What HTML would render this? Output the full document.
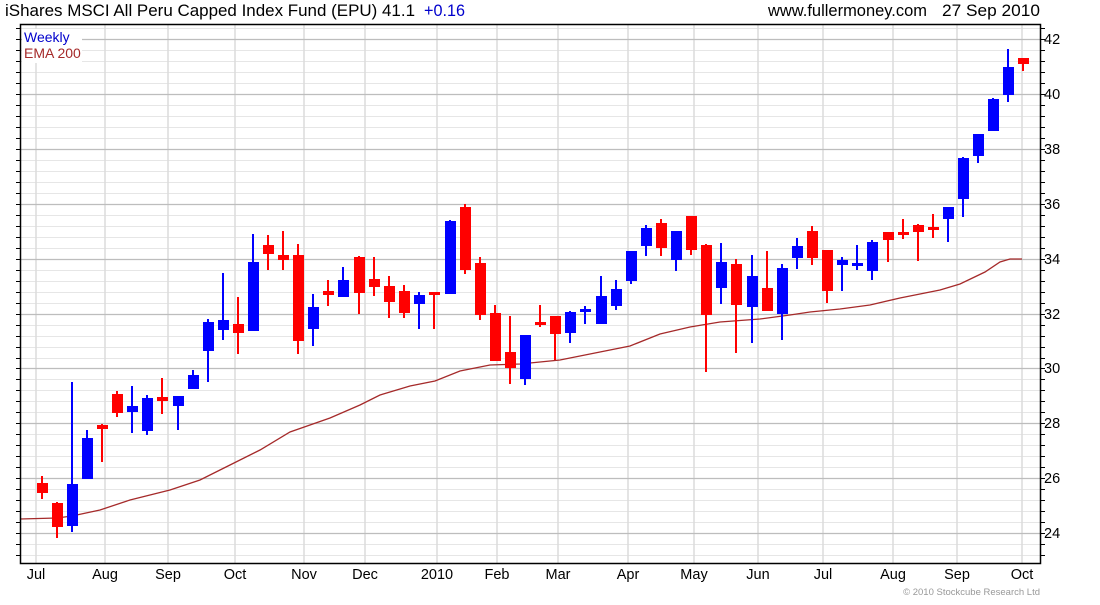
<!DOCTYPE html>
<html><head><meta charset="utf-8"><style>
body{margin:0;background:#fff;width:1100px;height:600px;overflow:hidden;font-family:"Liberation Sans",Arial,sans-serif}
svg text{font-family:"Liberation Sans",Arial,sans-serif}
</style></head><body>
<svg width="1100" height="600" viewBox="0 0 1100 600" xmlns="http://www.w3.org/2000/svg">
<g stroke="#e6e6e6" stroke-width="1">
<path d="M20 28.5H1040M20 50.5H1040M20 61.5H1040M20 72.5H1040M20 83.5H1040M20 105.5H1040M20 116.5H1040M20 127.5H1040M20 138.5H1040M20 160.5H1040M20 171.5H1040M20 182.5H1040M20 193.5H1040M20 215.5H1040M20 226.5H1040M20 237.5H1040M20 248.5H1040M20 270.5H1040M20 281.5H1040M20 292.5H1040M20 303.5H1040M20 325.5H1040M20 336.5H1040M20 347.5H1040M20 358.5H1040M20 379.5H1040M20 390.5H1040M20 401.5H1040M20 412.5H1040M20 434.5H1040M20 445.5H1040M20 456.5H1040M20 467.5H1040M20 489.5H1040M20 500.5H1040M20 511.5H1040M20 522.5H1040M20 544.5H1040M20 555.5H1040"/>
</g>
<g stroke="#dcdcdc" stroke-width="1.5">
<path d="M36 24V563M105 24V563M168 24V563M235 24V563M304 24V563M365 24V563M437 24V563M497 24V563M558 24V563M628 24V563M694 24V563M758 24V563M823 24V563M893 24V563M957 24V563M1022 24V563"/>
</g>
<g stroke="#bdbdbd" stroke-width="1.2">
<path d="M20 39.5H1040M20 94.5H1040M20 149.5H1040M20 204.5H1040M20 259.5H1040M20 314.5H1040M20 368.5H1040M20 423.5H1040M20 478.5H1040M20 533.5H1040"/>
</g>
<rect x="22" y="29" width="60" height="34" fill="#fff"/>
<polyline fill="none" stroke="#a52a2a" stroke-width="1.3" points="20,519 57,518 72,516 100,510 130,500 170,490 200,480 230,465 260,450 290,432 330,418 360,405 380,395 410,386 435,381 460,371 490,365 520,364 560,360 600,352 630,346 660,334 690,327 720,322 760,319 790,315 810,312 840,309 870,305 900,298 940,290 960,284 985,272 1000,262 1010,259 1022,259"/>
<g stroke="#ff0000" stroke-width="2" fill="#ff0000">
<path d="M42 476V499M57 502V538M102 424V462M117 391V417M162 378V414M238 297V354M268 235V270M283 231V270M298 244V354M328 280V306M359 256V314M374 257V296M389 276V318M404 285V318M434 292V329M465 204V274M480 257V320M495 305V361M510 316V384M540 305V327M555 316V360M661 219V256M691 216V255M706 244V372M736 259V353M767 251V311M812 226V265M827 250V303M888 232V262M903 219V239M918 224V261M933 214V238M1023 58V71"/>
</g>
<g fill="#ff0000">
<rect x="37" y="483" width="11" height="10"/><rect x="52" y="503" width="11" height="24"/><rect x="97" y="425" width="11" height="4"/><rect x="112" y="394" width="11" height="19"/><rect x="157" y="397" width="11" height="4"/><rect x="233" y="324" width="11" height="9"/><rect x="263" y="245" width="11" height="9"/><rect x="278" y="255" width="11" height="5"/><rect x="293" y="255" width="11" height="86"/><rect x="323" y="291" width="11" height="4"/><rect x="354" y="257" width="11" height="36"/><rect x="369" y="279" width="11" height="8"/><rect x="384" y="286" width="11" height="16"/><rect x="399" y="291" width="11" height="22"/><rect x="429" y="292" width="11" height="3"/><rect x="460" y="207" width="11" height="63"/><rect x="475" y="263" width="11" height="52"/><rect x="490" y="313" width="11" height="48"/><rect x="505" y="352" width="11" height="16"/><rect x="535" y="322" width="11" height="3"/><rect x="550" y="316" width="11" height="18"/><rect x="656" y="223" width="11" height="25"/><rect x="686" y="216" width="11" height="34"/><rect x="701" y="245" width="11" height="70"/><rect x="731" y="264" width="11" height="41"/><rect x="762" y="288" width="11" height="23"/><rect x="807" y="231" width="11" height="27"/><rect x="822" y="250" width="11" height="41"/><rect x="883" y="232" width="11" height="8"/><rect x="898" y="232" width="11" height="3"/><rect x="913" y="225" width="11" height="7"/><rect x="928" y="227" width="11" height="3"/><rect x="1018" y="58" width="11" height="6"/>
</g>
<g stroke="#0000ff" stroke-width="2">
<path d="M72 382V532M87 430V479M132 386V433M147 395V435M178 396V430M193 370V389M208 319V382M223 273V340M253 234V331M313 294V346M343 267V297M419 292V329M450 220V294M525 335V385M570 311V343M585 306V324M601 276V324M616 280V310M631 251V284M646 225V256M676 231V271M721 243V304M752 255V343M782 264V340M797 238V269M842 257V291M857 245V270M872 240V280M948 207V242M963 157V217M978 134V163M993 98V131M1008 49V102"/>
</g>
<g fill="#0000ff">
<rect x="67" y="484" width="11" height="42"/><rect x="82" y="438" width="11" height="41"/><rect x="127" y="406" width="11" height="6"/><rect x="142" y="398" width="11" height="33"/><rect x="173" y="396" width="11" height="10"/><rect x="188" y="375" width="11" height="14"/><rect x="203" y="322" width="11" height="29"/><rect x="218" y="320" width="11" height="10"/><rect x="248" y="262" width="11" height="69"/><rect x="308" y="307" width="11" height="22"/><rect x="338" y="280" width="11" height="17"/><rect x="414" y="295" width="11" height="9"/><rect x="445" y="221" width="11" height="73"/><rect x="520" y="335" width="11" height="44"/><rect x="565" y="312" width="11" height="21"/><rect x="580" y="309" width="11" height="3"/><rect x="596" y="296" width="11" height="28"/><rect x="611" y="289" width="11" height="17"/><rect x="626" y="251" width="11" height="30"/><rect x="641" y="228" width="11" height="18"/><rect x="671" y="231" width="11" height="29"/><rect x="716" y="262" width="11" height="26"/><rect x="747" y="276" width="11" height="31"/><rect x="777" y="268" width="11" height="46"/><rect x="792" y="246" width="11" height="12"/><rect x="837" y="260" width="11" height="5"/><rect x="852" y="263" width="11" height="3"/><rect x="867" y="242" width="11" height="29"/><rect x="943" y="207" width="11" height="12"/><rect x="958" y="158" width="11" height="41"/><rect x="973" y="134" width="11" height="22"/><rect x="988" y="99" width="11" height="32"/><rect x="1003" y="67" width="11" height="28"/>
</g>
<rect x="20.5" y="24.5" width="1020" height="539" fill="none" stroke="#000" stroke-width="1.5"/>
<g stroke="#000" stroke-width="1">
<path d="M16 28.5H20M16 39.5H20M16 50.5H20M16 61.5H20M16 72.5H20M16 83.5H20M16 94.5H20M16 105.5H20M16 116.5H20M16 127.5H20M16 138.5H20M16 149.5H20M16 160.5H20M16 171.5H20M16 182.5H20M16 193.5H20M16 204.5H20M16 215.5H20M16 226.5H20M16 237.5H20M16 248.5H20M16 259.5H20M16 270.5H20M16 281.5H20M16 292.5H20M16 303.5H20M16 314.5H20M16 325.5H20M16 336.5H20M16 347.5H20M16 358.5H20M16 368.5H20M16 379.5H20M16 390.5H20M16 401.5H20M16 412.5H20M16 423.5H20M16 434.5H20M16 445.5H20M16 456.5H20M16 467.5H20M16 478.5H20M16 489.5H20M16 500.5H20M16 511.5H20M16 522.5H20M16 533.5H20M16 544.5H20M16 555.5H20"/>
<path d="M1040 28.5H1045M1040 39.5H1045M1040 50.5H1045M1040 61.5H1045M1040 72.5H1045M1040 83.5H1045M1040 94.5H1045M1040 105.5H1045M1040 116.5H1045M1040 127.5H1045M1040 138.5H1045M1040 149.5H1045M1040 160.5H1045M1040 171.5H1045M1040 182.5H1045M1040 193.5H1045M1040 204.5H1045M1040 215.5H1045M1040 226.5H1045M1040 237.5H1045M1040 248.5H1045M1040 259.5H1045M1040 270.5H1045M1040 281.5H1045M1040 292.5H1045M1040 303.5H1045M1040 314.5H1045M1040 325.5H1045M1040 336.5H1045M1040 347.5H1045M1040 358.5H1045M1040 368.5H1045M1040 379.5H1045M1040 390.5H1045M1040 401.5H1045M1040 412.5H1045M1040 423.5H1045M1040 434.5H1045M1040 445.5H1045M1040 456.5H1045M1040 467.5H1045M1040 478.5H1045M1040 489.5H1045M1040 500.5H1045M1040 511.5H1045M1040 522.5H1045M1040 533.5H1045M1040 544.5H1045M1040 555.5H1045"/>
</g>
<g font-size="14.5" fill="#000">
<text x="1044" y="44">42</text><text x="1044" y="99">40</text><text x="1044" y="154">38</text><text x="1044" y="209">36</text><text x="1044" y="264">34</text><text x="1044" y="319">32</text><text x="1044" y="373">30</text><text x="1044" y="428">28</text><text x="1044" y="483">26</text><text x="1044" y="538">24</text>
</g>
<g font-size="14.5" fill="#000" text-anchor="middle">
<text x="36" y="579">Jul</text><text x="105" y="579">Aug</text><text x="168" y="579">Sep</text><text x="235" y="579">Oct</text><text x="304" y="579">Nov</text><text x="365" y="579">Dec</text><text x="437" y="579">2010</text><text x="497" y="579">Feb</text><text x="558" y="579">Mar</text><text x="628" y="579">Apr</text><text x="694" y="579">May</text><text x="758" y="579">Jun</text><text x="823" y="579">Jul</text><text x="893" y="579">Aug</text><text x="957" y="579">Sep</text><text x="1022" y="579">Oct</text>
</g>
<text x="5" y="16" font-size="16.5" fill="#000" textLength="410" lengthAdjust="spacingAndGlyphs">iShares MSCI All Peru Capped Index Fund (EPU) 41.1</text>
<text x="424" y="16" font-size="16.5" fill="#0000cc" textLength="41" lengthAdjust="spacingAndGlyphs">+0.16</text>
<text x="768" y="16" font-size="16.5" fill="#000" textLength="159" lengthAdjust="spacingAndGlyphs">www.fullermoney.com</text>
<text x="942" y="16" font-size="16.5" fill="#000" textLength="98" lengthAdjust="spacingAndGlyphs">27 Sep 2010</text>
<text x="24" y="42" font-size="14" fill="#0000cc">Weekly</text>
<text x="24" y="58" font-size="14" fill="#a52a2a">EMA 200</text>
<text x="1040" y="595" font-size="9.5" fill="#999" text-anchor="end">© 2010 Stockcube Research Ltd</text>
</svg>
</body></html>
